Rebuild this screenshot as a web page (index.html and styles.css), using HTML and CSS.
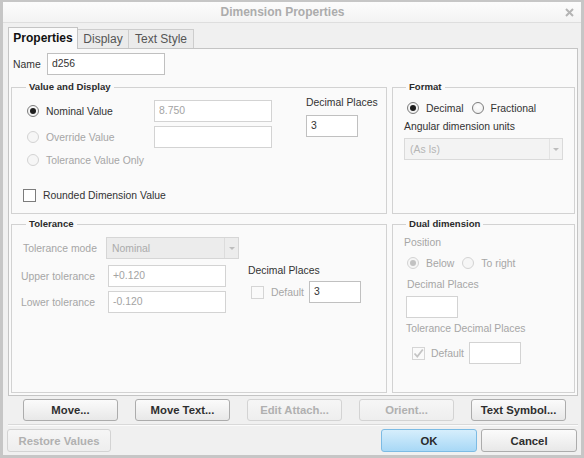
FILE: index.html
```html
<!DOCTYPE html>
<html>
<head>
<meta charset="utf-8">
<title>Dimension Properties</title>
<link rel="stylesheet" href="styles.css">
</head>
<body>
<div class="window">
  <div class="titlebar">
    <div class="title">Dimension Properties</div>
    <div class="close"><svg width="9" height="9" viewBox="0 0 9 9"><path d="M1 1L8 8M8 1L1 8" stroke="#b4b4b4" stroke-width="2" fill="none"/></svg></div>
  </div>
  <div class="body">
    <div class="tabs">
      <div class="tab active">Properties</div>
      <div class="tab t-display">Display</div>
      <div class="tab t-text">Text Style</div>
    </div>
    <div class="panel">
      <div class="name-row"><span class="name-lbl">Name</span><div class="input w118">d256</div></div>
      <div class="groups">
        <fieldset class="group">
          <legend>Value and Display</legend>
          <div class="vd-body">
            <div class="vd-left">
              <div class="opt-row"><span class="opt"><span class="radio on"></span><span>Nominal Value</span></span><div class="input dis w118">8.750</div></div>
              <div class="opt-row"><span class="opt dis-t"><span class="radio dis"></span><span>Override Value</span></span><div class="input dis w118"></div></div>
              <div class="opt-row short"><span class="opt dis-t"><span class="radio dis"></span><span>Tolerance Value Only</span></span></div>
              <div class="check-row"><span class="check"></span><span>Rounded Dimension Value</span></div>
            </div>
            <div class="vd-right">
              <div class="lbl-line">Decimal Places</div>
              <div class="input w52 gap6">3</div>
            </div>
          </div>
        </fieldset>
        <fieldset class="group right">
          <legend>Format</legend>
          <div class="fmt-body">
            <div class="radio-line"><span class="radio on"></span><span class="rl">Decimal</span><span class="radio"></span><span>Fractional</span></div>
            <div class="lbl-line mt5">Angular dimension units</div>
            <div class="select w159 mt5"><span class="val">(As Is)</span><span class="arrow"></span></div>
          </div>
        </fieldset>
        <fieldset class="group">
          <legend>Tolerance</legend>
          <div class="tol-body">
            <div class="tol-left">
              <div class="tol-row"><span class="tl dis-t pl2">Tolerance mode</span><div class="select dark w133 h20"><span class="val">Nominal</span><span class="arrow"></span></div></div>
              <div class="tol-row mt6"><span class="tl dis-t">Upper tolerance</span><div class="input dis w118 ml2">+0.120</div></div>
              <div class="tol-row mt4"><span class="tl dis-t">Lower tolerance</span><div class="input dis w118 ml2">-0.120</div></div>
            </div>
            <div class="tol-right">
              <div class="lbl-line">Decimal Places</div>
              <div class="def-row mt4"><span class="check dis ml3"></span><span class="def-lbl dis-t">Default</span><div class="input w52">3</div></div>
            </div>
          </div>
        </fieldset>
        <fieldset class="group right">
          <legend>Dual dimension</legend>
          <div class="dual-body">
            <div class="lbl-line dis-t">Position</div>
            <div class="radio-line pos dis-t"><span class="radio dis on"></span><span class="rl">Below</span><span class="radio dis"></span><span>To right</span></div>
            <div class="lbl-line dis-t dp">Decimal Places</div>
            <div class="input dis w52 dpi"></div>
            <div class="lbl-line dis-t tdp">Tolerance Decimal Places</div>
            <div class="def-row mt7"><span class="check dis ml8"><svg width="11" height="11" viewBox="0 0 11 11"><path d="M1.5 5.5L4.3 8.5L9.8 1.5" stroke="#c4c4c4" stroke-width="1.8" fill="none"/></svg></span><span class="def-lbl dis-t sm">Default</span><div class="input dis w52"></div></div>
          </div>
        </fieldset>
      </div>
    </div>
    <div class="btn-row">
      <div class="btn">Move...</div>
      <div class="btn">Move Text...</div>
      <div class="btn dis">Edit Attach...</div>
      <div class="btn dis">Orient...</div>
      <div class="btn">Text Symbol...</div>
    </div>
    <div class="sep"></div>
    <div class="foot">
      <div class="btn dis restore">Restore Values</div>
      <div class="btn ok">OK</div>
      <div class="btn cancel">Cancel</div>
    </div>
  </div>
</div>
</body>
</html>
```
FILE: styles.css
```css
* { box-sizing: border-box; }
html, body { margin: 0; padding: 0; }
body {
  width: 584px; height: 458px; overflow: hidden;
  font-family: "Liberation Sans", Arial, sans-serif;
  font-size: 10.4px; color: #333; background: #c6c6c6;
}
.window {
  width: 584px; height: 458px;
  border-style: solid; border-color: #c6c6c6; border-width: 2px 3px 3px 3px;
  background: #f0f0f0;
  display: flex; flex-direction: column;
}
.titlebar {
  height: 21px; flex: none; display: flex; align-items: center;
  background: linear-gradient(#fcfcfc, #f3f3f3);
  border-bottom: 1px solid #dedede;
}
.title { flex: 1; text-align: center; padding-left: 5px; font-size: 12px; font-weight: bold; color: #acacac; }
.close { width: 24px; height: 20px; display: flex; align-items: center; justify-content: center; }
.close svg { display: block; }
.body { flex: 1; padding: 4px 3px 3px 5px; display: flex; flex-direction: column; }

.tabs { display: flex; align-items: flex-end; height: 21px; flex: none; }
.tab {
  height: 19px; line-height: 18px; text-align: center; font-size: 12px; color: #555;
  background: #ebebeb; border-top: 1px solid #cdcdcd; border-right: 1px solid #cdcdcd;
}
.tab.active {
  width: 70px; height: 22px; line-height: 21px; margin-bottom: -1px;
  border: 1px solid #c4c4c4; border-bottom: 0; background: #fafafa;
  color: #111; font-weight: bold; position: relative; z-index: 1;
}
.tab.t-display { width: 51px; }
.tab.t-text { width: 65px; }

.panel {
  height: 348px; flex: none; border: 1px solid #c4c4c4; background: #fafafa;
  padding: 4px 2px 2px 1px; display: flex; flex-direction: column;
}
.name-row { display: flex; align-items: center; padding-left: 3px; height: 22px; flex: none; }
.name-lbl { width: 34px; }

.input {
  height: 22px; border: 1px solid #c0c0c0; background: #fff; padding-left: 4px;
  line-height: 20px; color: #333; flex: none;
}
.input.dis { border-color: #d3d3d3; color: #a3a3a3; }
.w118 { width: 118px; }
.w52 { width: 52px; }
.w159 { width: 159px; }
.w133 { width: 133px; }
.h20 { height: 20px; }
.mt4 { margin-top: 4px; }
.mt5 { margin-top: 5px; }
.mt6 { margin-top: 6px; }
.mt7 { margin-top: 7px; }
.ml2 { margin-left: 2px; }
.ml3 { margin-left: 3px; }
.ml8 { margin-left: 8px; }
.pl2 { padding-left: 2px; }
.gap6 { margin-top: 6px; }
.dis-t { color: #a6a6a6; }

.groups {
  margin-top: 6px; margin-left: 1px;
  display: grid; grid-template-columns: 376px 183px; grid-template-rows: 133px 175px;
  column-gap: 5px; row-gap: 4px;
}
fieldset.group { margin: 0; padding: 0; min-width: 0; border: 1px solid #d2d2d2; }
legend {
  margin-left: 14px; padding: 0 3px; font-size: 9.6px; font-weight: bold;
  line-height: 12px; color: #2b2b2b;
}
.group.right legend { margin-left: 13px; }

.radio {
  width: 12px; height: 12px; border-radius: 50%; border: 1px solid #7c7c7c;
  background: radial-gradient(circle at 50% 40%, #fff, #ebebeb);
  margin-right: 7px; flex: none; position: relative;
}
.radio.on::after {
  content: ""; position: absolute; left: 2px; top: 2px; width: 6px; height: 6px;
  border-radius: 50%; background: #1e1e1e;
}
.radio.dis { border-color: #d3d3d3; background: #f6f6f6; }
.radio.dis.on::after { background: #c2c2c2; }
.check {
  width: 13px; height: 13px; border: 1px solid #7c7c7c; background: #fff; flex: none;
  display: flex; align-items: center; justify-content: center;
}
.check.dis { border-color: #d5d5d5; background: #fafafa; }
.check svg { display: block; }

.vd-body { display: flex; padding-top: 4px; }
.vd-left { padding-left: 15px; padding-top: 3px; display: flex; flex-direction: column; }
.opt-row { display: flex; align-items: center; height: 22px; }
.opt-row + .opt-row { margin-top: 4px; }
.opt-row.short { height: 16px; }
.opt { width: 127px; display: flex; align-items: center; }
.check-row { display: flex; align-items: center; height: 14px; margin-top: 20px; margin-left: -4px; }
.check-row .check { margin-right: 7px; }
.vd-right { margin-left: 34px; }
.lbl-line { line-height: 12px; height: 12px; white-space: nowrap; }

.fmt-body { padding: 7px 0 0 11px; }
.radio-line { display: flex; align-items: center; height: 16px; margin-left: 3px; }
.radio-line .rl { margin-right: 8px; }

.select {
  height: 22px; display: flex; align-items: stretch; border: 1px solid #dadada;
  background: #f3f3f3; color: #b5b5b5;
}
.select .val { flex: 1; padding-left: 5px; display: flex; align-items: center; }
.select .arrow {
  width: 13px; border-left: 1px solid #e3e3e3; display: flex; align-items: center; justify-content: center;
}
.select .arrow::after {
  content: ""; border-left: 3px solid transparent; border-right: 3px solid transparent;
  border-top: 3px solid #bdbdbd;
}
.select.dark { background: #ececec; border-color: #d6d6d6; color: #ababab; }
.select.dark .arrow { width: 14px; border-left-color: #dcdcdc; }

.tol-body { display: flex; }
.tol-left { padding: 7px 0 0 9px; }
.tol-row { display: flex; align-items: center; }
.tl { width: 85px; white-space: nowrap; }
.tol-right { margin-left: 9px; padding-top: 35px; }
.def-row { display: flex; align-items: center; height: 22px; }
.def-lbl { width: 38px; margin-left: 7px; }
.def-lbl.sm { margin-left: 6px; }

.dual-body { padding: 7px 0 0 11px; }
.radio-line.pos { margin-top: 6px; }
.dp { margin-top: 8px; padding-left: 3px; }
.dpi { margin-top: 5px; margin-left: 2px; }
.tdp { margin-top: 5px; padding-left: 2px; }

.btn-row { display: flex; gap: 17px; padding-left: 15px; margin-top: 3px; flex: none; }
.btn {
  width: 95px; height: 22px; border: 1px solid #acacac; border-radius: 3px;
  background: linear-gradient(#fbfbfb, #e8e8e8);
  display: flex; align-items: center; justify-content: center;
  font-size: 11.3px; font-weight: bold; color: #2e2e2e; flex: none;
}
.btn.dis { border-color: #d3d3d3; background: linear-gradient(#f6f6f6, #eeeeee); color: #b0b0b0; }
.sep { margin-top: 3px; height: 2px; border-top: 1px solid #d9d9d9; border-bottom: 1px solid #fbfbfb; flex: none; }
.foot { display: flex; margin-top: 3px; margin-left: -1px; padding-right: 1px; gap: 4px; flex: none; }
.foot .btn { height: 23px; width: 96px; }
.foot .btn.restore { width: 104px; margin-right: auto; }
.btn.ok { background: linear-gradient(#d6eefc, #a8d8f6); border-color: #7cbbe4; color: #2a2a2a; }
```
